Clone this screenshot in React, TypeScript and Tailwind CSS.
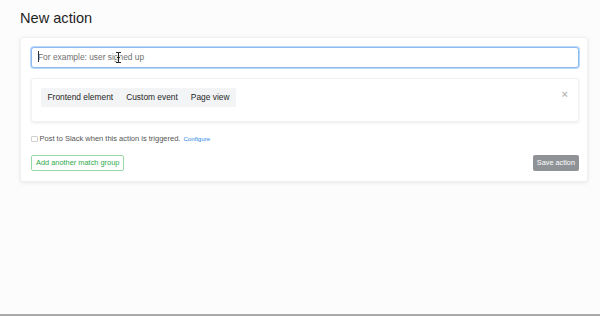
import React from "react";

export default function App() {
  const font = { fontFamily: '"Liberation Sans", Arial, sans-serif' };
  return (
    <div
      className="relative w-[600px] h-[316px] bg-[#fcfcfc] flex flex-col overflow-hidden"
      style={font}
    >
      <div className="flex-1 flex flex-col px-[20px] pr-[12px]">
        <h1 className="mt-[10px] text-[14.6px] leading-[17px] text-[#1f1f1f] font-normal">
          New action
        </h1>
        <div className="mt-[10px] bg-white rounded-[3px] shadow-[0_1px_4px_rgba(0,0,0,0.08)] border border-[#f0f0f0] pl-[10px] pr-[8px] pt-[9px] pb-[10px] flex flex-col">
          <div className="relative h-[21px] rounded-[3px] border border-[#8dbcf4] shadow-[0_0_0_1px_rgba(141,188,244,0.6)] bg-white flex items-center pl-[6px]">
            <span className="text-[8.4px] text-[#6f6f6f] leading-none relative">
              <span className="absolute left-[-0.5px] top-[-2px] w-px h-[11px] bg-[#333]" />
              For example: user signed up
            </span>
            <svg
              className="absolute left-[83px] top-[4px]"
              width="7"
              height="11"
              viewBox="0 0 7 11"
            >
              <path
                d="M1 0.5 H3.5 M3.5 0.5 H6 M3.5 0.5 V10.5 M1 10.5 H3.5 M3.5 10.5 H6 M2 5.5 H5"
                stroke="#fff"
                strokeWidth="2.2"
                fill="none"
              />
              <path
                d="M1 0.5 H3.5 M3.5 0.5 H6 M3.5 0.5 V10.5 M1 10.5 H3.5 M3.5 10.5 H6 M2 5.5 H5"
                stroke="#222"
                strokeWidth="1"
                fill="none"
              />
            </svg>
          </div>

          <div className="relative mt-[10px] bg-white rounded-[3px] shadow-[0_1px_3px_rgba(0,0,0,0.09)] border border-[#f2f2f2] px-[9px] pt-[9px] pb-[14px] flex">
            <div className="flex bg-[#f3f4f5] rounded-[2px] h-[19px] items-center">
              <span className="px-[6.5px] text-[8.4px] text-[#262626]">Frontend element</span>
              <span className="px-[6.5px] text-[8.4px] text-[#262626]">Custom event</span>
              <span className="px-[6.5px] text-[8.4px] text-[#262626]">Page view</span>
            </div>
            <span className="absolute right-[10px] top-[10px] text-[11px] leading-none text-[#bdbdbd] font-bold">
              ×
            </span>
          </div>

          <div className="mt-[12px] flex items-center h-[10px]">
            <span className="w-[6.5px] h-[6.5px] border border-[#cfcfcf] rounded-[1px] bg-white" />
            <span className="ml-[2px] text-[7.5px] text-[#555]">
              Post to Slack when this action is triggered.
            </span>
            <span className="ml-[3px] text-[6.2px] text-[#2f8ae6]">Configure</span>
          </div>

          <div className="mt-[11px] flex justify-between items-center">
            <button className="h-[16px] px-[4px] border border-[#98d9a5] rounded-[2px] text-[7.4px] text-[#2faa4a] bg-white leading-none">
              Add another match group
            </button>
            <button className="h-[16px] px-[4px] rounded-[2px] bg-[#8f9296] text-[7.3px] text-white leading-none">
              Save action
            </button>
          </div>
        </div>
      </div>
      <div className="h-[2px] bg-[#a9a9a9]" />
    </div>
  );
}
